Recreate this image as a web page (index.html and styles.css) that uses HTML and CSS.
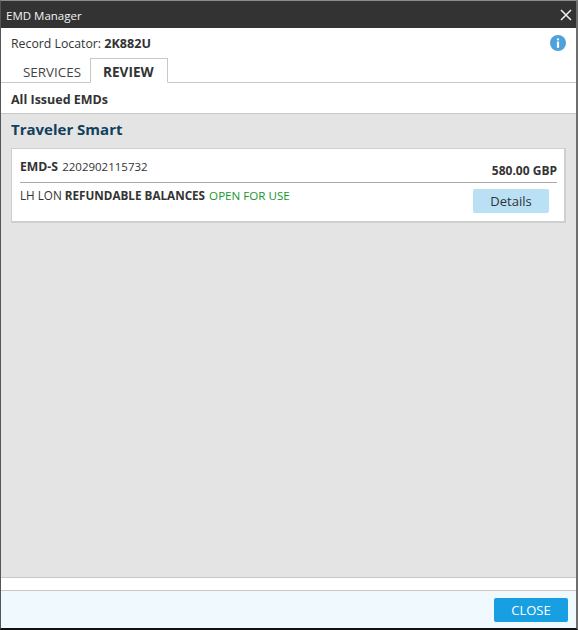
FILE: index.html
```html
<!DOCTYPE html>
<html lang="en">
<head>
<meta charset="utf-8">
<title>EMD Manager</title>
<link rel="stylesheet" href="styles.css">
</head>
<body>
<div class="window">
  <header class="titlebar">
    <span class="title">EMD Manager</span>
    <svg class="close-x" width="12" height="12" viewBox="0 0 12 12"><path d="M1 1 L11 11 M11 1 L1 11" stroke="#f2f2f2" stroke-width="1.5" fill="none"/></svg>
  </header>
  <div class="locator">
    <span>Record Locator: <b>2K882U</b></span>
    <svg class="info" width="16" height="16" viewBox="0 0 16 16"><circle cx="8" cy="8" r="8" fill="#4fa1dc"/><rect x="6.9" y="6.6" width="2.2" height="6.2" fill="#fff"/><rect x="6.9" y="3.2" width="2.2" height="2.2" rx="1" fill="#fff"/></svg>
  </div>
  <nav class="tabs">
    <span class="tab">SERVICES</span>
    <span class="tab tab-active">REVIEW</span>
  </nav>
  <div class="section-head">All Issued EMDs</div>
  <main class="content">
    <h2 class="traveler">Traveler Smart</h2>
    <section class="card">
      <div class="card-top">
        <span class="emd"><b>EMD-S</b> <span class="emd-number">2202902115732</span></span>
        <b class="amount">580.00 GBP</b>
      </div>
      <div class="card-bottom">
        <span class="desc">LH LON <b>REFUNDABLE BALANCES</b> <span class="status">OPEN FOR USE</span></span>
        <button class="details">Details</button>
      </div>
    </section>
  </main>
  <div class="spacer"></div>
  <footer class="footer">
    <button class="close-btn">CLOSE</button>
  </footer>
</div>
</body>
</html>
```
FILE: styles.css
```css
* { box-sizing: border-box; }
html, body { margin: 0; padding: 0; }
body { width: 578px; height: 630px; overflow: hidden; font-family: "Open Sans", "Noto Sans", sans-serif; color: #333; font-size: 12px; }
b { font-weight: 700; }
.window { width: 578px; height: 630px; display: flex; flex-direction: column; background: #fff; border-style: solid; border-color: #8c8c8c #6e6e6e #111 #555; border-width: 1px 2px 2px 1px; }
.titlebar { height: 27px; flex: none; background: #333; color: #f4f4f4; display: flex; align-items: center; justify-content: space-between; padding: 2px 4px 0 5px; font-size: 11.5px; }
.close-x { margin-top: -2px; }
.locator { height: 30px; flex: none; display: flex; align-items: center; justify-content: space-between; padding: 0 10px 0 10px; font-size: 12.3px; }
.locator b { font-size: 12.6px; }
.info { display: block; }
.tabs { height: 25px; flex: none; display: flex; padding-left: 11px; border-bottom: 1px solid #c8c8c8; font-size: 13.4px; line-height: 18px; }
.tab { height: 25px; width: 78px; padding: 5px 0 0 11px; color: #444; }
.tab-active { width: 78px; background: #fff; border: 1px solid #c8c8c8; border-bottom: 1px solid #fff; font-weight: 700; color: #333; padding: 4px 0 0 12px; font-size: 13.6px; }
.section-head { height: 31px; flex: none; display: flex; align-items: center; padding: 2px 0 0 10px; font-size: 12.5px; font-weight: 700; border-bottom: 1px solid #c8c8c8; }
.content { flex: 1; background: #e4e4e4; padding: 5px 10px; border-bottom: 1px solid #c8c8c8; }
.traveler { margin: 0 0 9px; font-size: 15px; line-height: 20px; font-weight: 700; color: #123f5c; }
.card { background: #fff; border: 1px solid #cfcfcf; border-width: 1px 2px 2px 1px; height: 75px; padding: 0 7px 0 8px; }
.card-top { height: 34px; display: flex; justify-content: space-between; padding-top: 10px; border-bottom: 1px solid #aaa; font-size: 12.2px; line-height: 16px; }
.emd-number { font-size: 11.5px; margin-left: 1px; }
.amount { padding-top: 4px; font-size: 12px; }
.card-bottom { display: flex; justify-content: space-between; align-items: flex-start; padding-top: 6px; font-size: 11.7px; line-height: 16px; }
.desc { margin-top: -2px; }
.status { color: #17962c; margin-left: 1px; font-size: 11.6px; }
.details { width: 76px; height: 24px; margin-right: 8px; border: 0; border-radius: 2px; background: #b9e0f5; color: #333; font: 13px "Open Sans", sans-serif; padding: 0; }
.spacer { height: 13px; flex: none; border-bottom: 1px solid #c8c8c8; }
.footer { height: 37px; flex: none; background: #f0f9fd; display: flex; justify-content: flex-end; align-items: flex-start; padding: 7px 8px 0 0; }
.close-btn { width: 74px; height: 24px; border: 0; border-radius: 2px; background: #179fe2; color: #fff; font: 13px "Open Sans", sans-serif; padding: 0; }
```
